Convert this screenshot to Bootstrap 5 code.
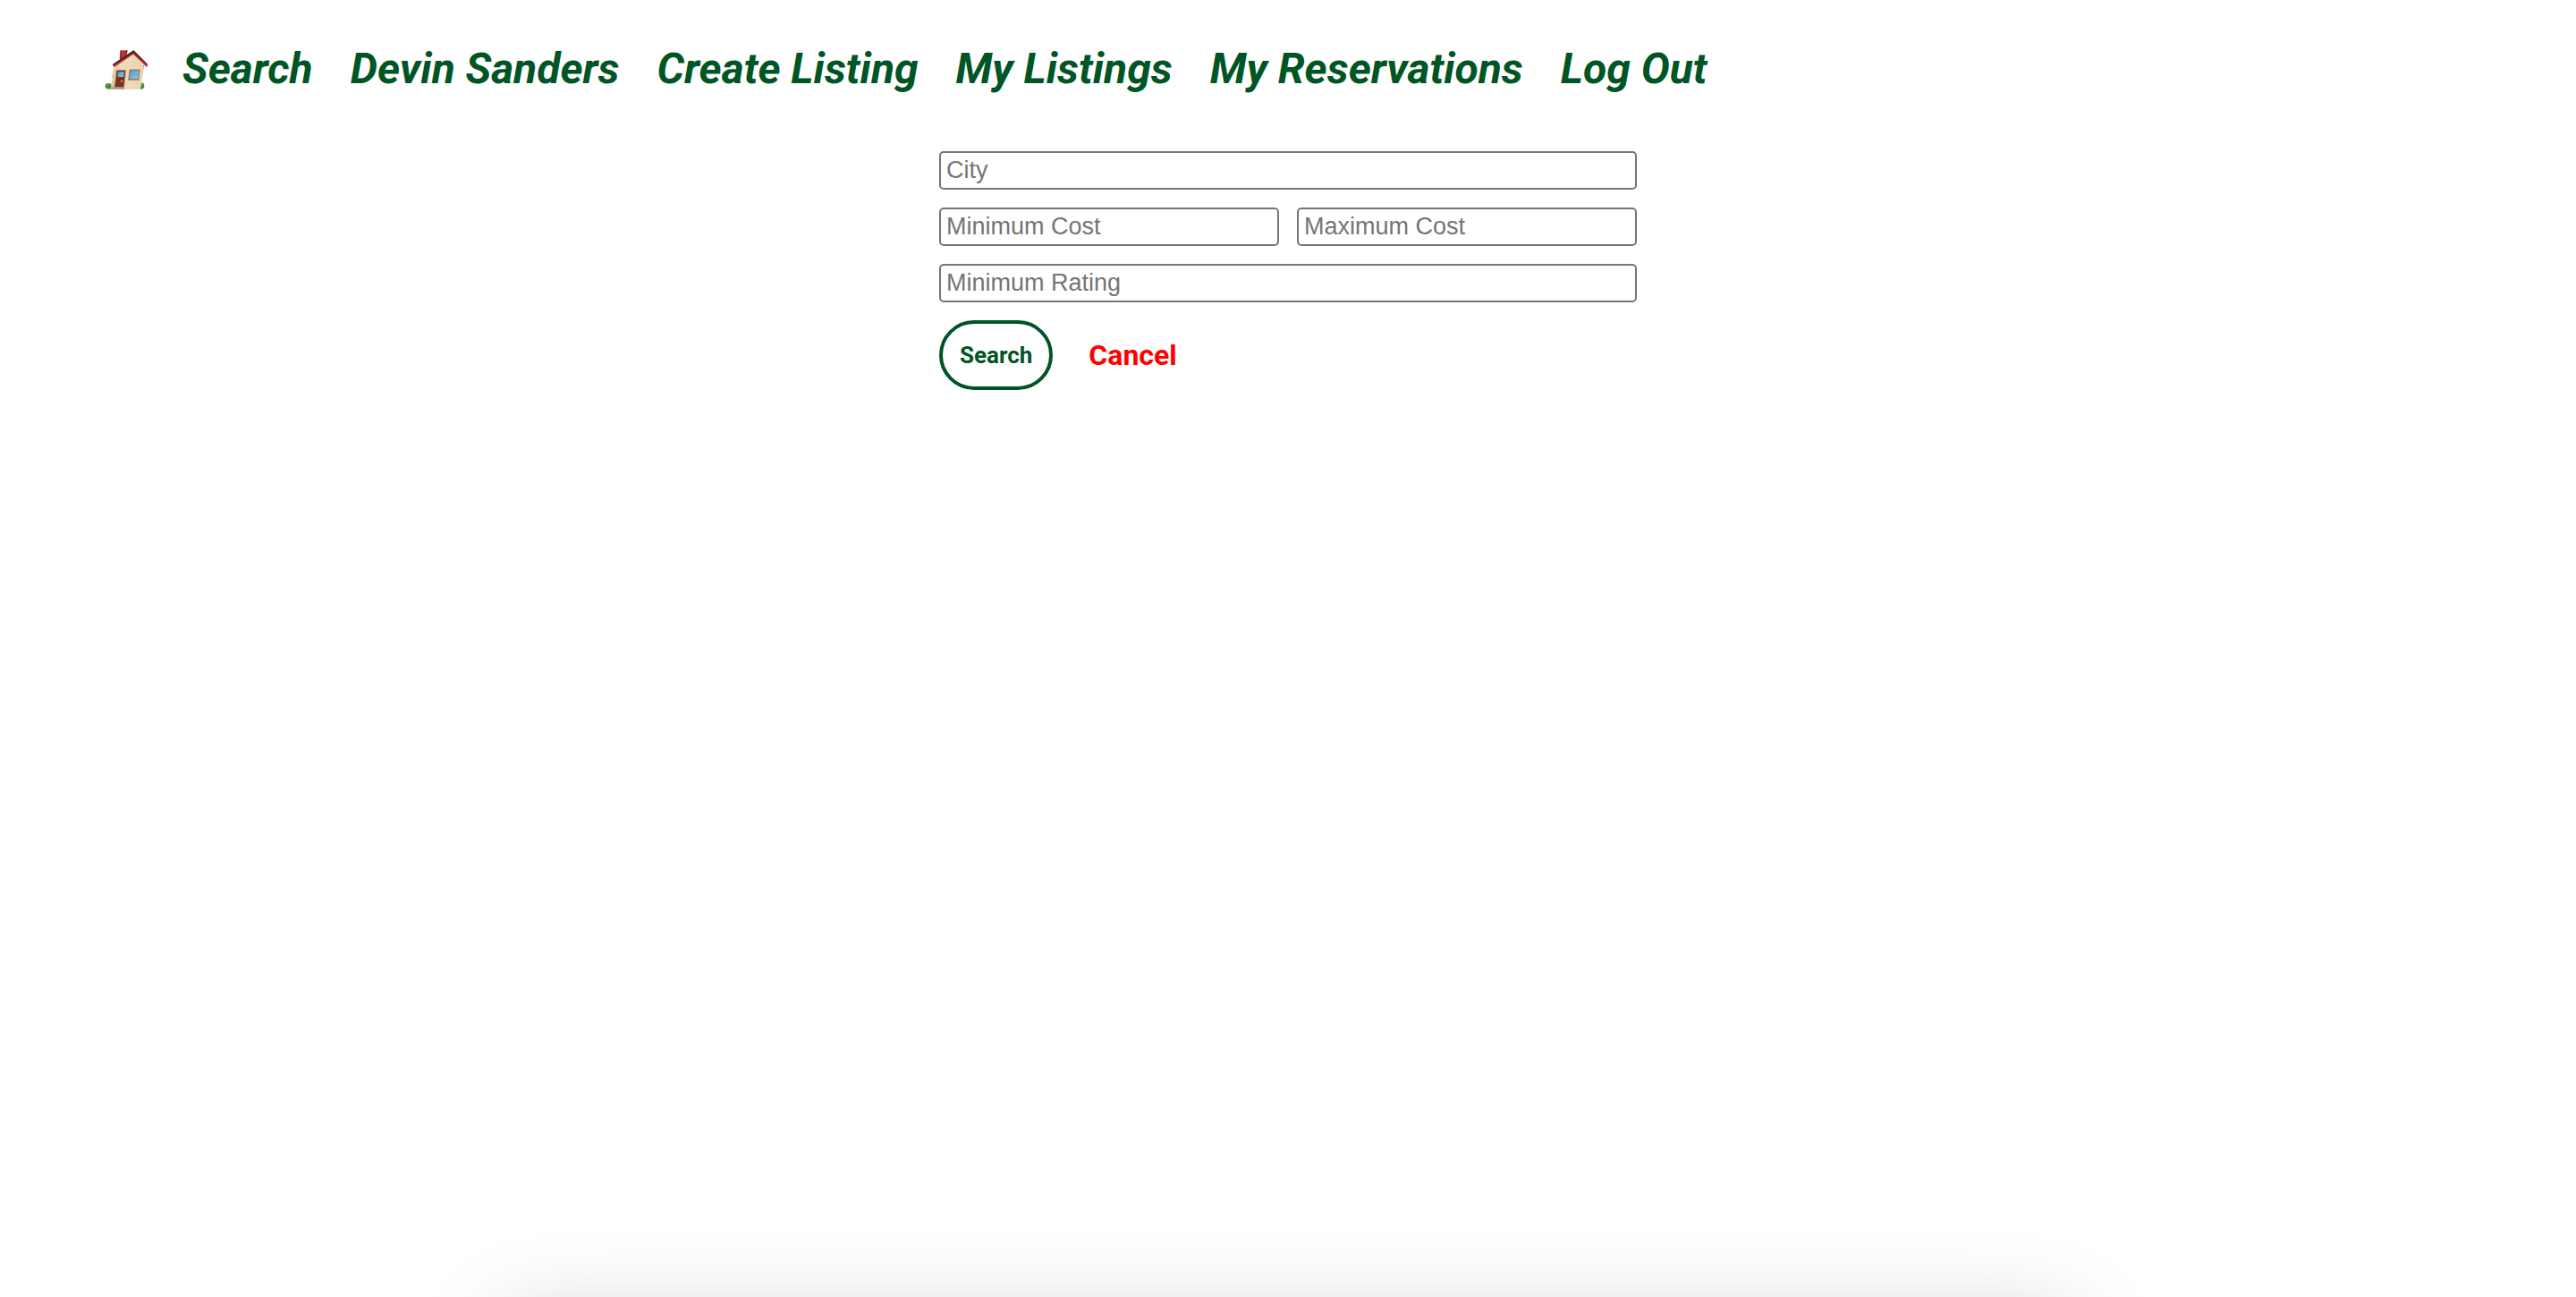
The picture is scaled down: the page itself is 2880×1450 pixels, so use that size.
<!DOCTYPE html>
<html lang="en">
<head>
<meta charset="utf-8">
<meta name="viewport" content="width=device-width, initial-scale=1">
<title>Search Listings</title>
<link href="https://cdn.jsdelivr.net/npm/bootstrap@5.3.0/dist/css/bootstrap.min.css" rel="stylesheet">
<style>
  body { font-family: Roboto, sans-serif; color: #005524; background: #fff; }
  .site-nav { padding: 41px 116px 39px; gap: 42px; font-size: 48px; line-height: 72px; font-weight: 700; font-style: italic; }
  .site-nav a { color: #005524; white-space: nowrap; }
  .house { width: 46px; height: 48px; overflow: visible; display: block; }
  .search-form { max-width: 780px; gap: 20px; padding-top: 17px; }
  .pair { gap: 20px; }
  .search-form .form-control {
    font-family: "Liberation Sans", sans-serif; font-size: 27px; line-height: 31px;
    padding: 4px 6px; height: 43px; min-height: 0; border: 2px solid #767676; border-radius: 5px;
  }
  .search-form .form-control::placeholder { color: #757575; }
  .actions { gap: 40px; }
  .btn-search {
    font-size: 26px; line-height: 30px; font-weight: 700; padding: 20px 19px; color: #005524;
    background: #fff; border: 4px solid #005524; border-radius: 40px;
  }
  .cancel-link { font-size: 32px; line-height: 40px; font-weight: 700; color: #f00; }
  .edge-shadow { height: 110px; overflow: hidden; pointer-events: none; }
  .edge-shadow div { width: 61%; height: 300px; margin: 134px auto 0; box-shadow: 0 0 100px rgba(0, 0, 0, .19); }
</style>
</head>
<body>
<nav aria-label="Main">
  <ul class="site-nav list-unstyled d-flex flex-wrap align-items-center m-0">
    <li>
      <a href="#" aria-label="Home">
        <svg class="house" viewBox="48 41 138 144" aria-hidden="true">
          <defs>
            <linearGradient id="chimney" x1="0" x2="1"><stop offset="0" stop-color="#8c2424"/><stop offset=".5" stop-color="#c63a38"/><stop offset="1" stop-color="#782020"/></linearGradient>
            <linearGradient id="wall" x1="0" x2="1"><stop offset="0" stop-color="#dcc6a2"/><stop offset=".3" stop-color="#f3dfbf"/><stop offset="1" stop-color="#ead5b2"/></linearGradient>
            <linearGradient id="glass" x1="0" y1="0" x2="1" y2="1"><stop offset="0" stop-color="#4f9ad6"/><stop offset="1" stop-color="#8cc4ec"/></linearGradient>
          </defs>
          <path d="M103 51h25l-3 18-24 20z" fill="url(#chimney)"/>
          <ellipse cx="64" cy="171" rx="11" ry="10" fill="#4c8a35"/>
          <ellipse cx="173" cy="170" rx="11" ry="11" fill="#4c8a35"/>
          <path d="M58 168q5-7 11-3M168 166q6-6 11 0" stroke="#80b759" stroke-width="3" fill="none"/>
          <path d="M183 102l-8 46-3 3 8-50z" fill="#4c4039"/>
          <path d="M84 104L147 60l36 46-12 76H71l6-40-3-2z" fill="url(#wall)"/>
          <path d="M86 113h91M84 122h92M82 141h92M80 160h90M95 103h82M110 92h62" stroke="#dac5a1" stroke-width="1" fill="none"/>
          <path d="M77 99L148 51l48 48-4 9-45-44-64 44z" fill="#ce3533"/>
          <path d="M78 98L148 51l47 47-3 1-45-40-65 42z" fill="#30282a"/>
          <path d="M90 116h33l-6 61H82z" fill="#a68b70"/>
          <path d="M93 119h27l-6 57H85z" fill="#79331f"/>
          <path d="M97 123h19l-2 17H95z" fill="url(#glass)"/>
          <circle cx="108" cy="154" r="3" fill="#f3bd52"/>
          <path d="M74 174h45l-2 8H70z" fill="#b6a08c"/>
          <path d="M134 115h36l-4 35h-36z" fill="#8a735d"/>
          <path d="M138 119h28l-3 27h-29z" fill="url(#glass)"/>
          <path d="M129 148h38v4h-39z" fill="#aa967d"/>
        </svg>
      </a>
    </li>
    <li><a class="text-decoration-none" href="#">Search</a></li>
    <li><a class="text-decoration-none" href="#">Devin Sanders</a></li>
    <li><a class="text-decoration-none" href="#">Create Listing</a></li>
    <li><a class="text-decoration-none" href="#">My Listings</a></li>
    <li><a class="text-decoration-none" href="#">My Reservations</a></li>
    <li><a class="text-decoration-none" href="#">Log Out</a></li>
  </ul>
</nav>
<main>
  <form class="search-form d-flex flex-column mx-auto">
    <input class="form-control" type="text" placeholder="City" aria-label="City">
    <div class="pair d-flex">
      <input class="form-control" type="text" placeholder="Minimum Cost" aria-label="Minimum Cost">
      <input class="form-control" type="text" placeholder="Maximum Cost" aria-label="Maximum Cost">
    </div>
    <input class="form-control" type="text" placeholder="Minimum Rating" aria-label="Minimum Rating">
    <div class="actions d-flex align-items-center">
      <button class="btn btn-search" type="submit">Search</button>
      <a class="cancel-link text-decoration-none" href="#">Cancel</a>
    </div>
  </form>
</main>
<div class="edge-shadow fixed-bottom" aria-hidden="true"><div></div></div>
<script src="https://cdn.jsdelivr.net/npm/bootstrap@5.3.0/dist/js/bootstrap.bundle.min.js"></script>
</body>
</html>
